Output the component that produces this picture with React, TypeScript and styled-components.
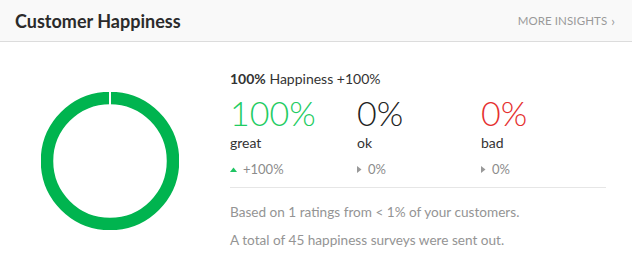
import React from 'react';
import styled, { createGlobalStyle } from 'styled-components';

const GlobalStyle = createGlobalStyle`
    html, body {
        margin: 0;
        padding: 0;
        background: #fff;
    }
    body {
        font-family: Lato, "Open Sans", sans-serif;
        color: #333;
    }
`;

const Card = styled.div`
    width: 632px;
    height: 279px;
    background: #fff;
    overflow: hidden;
`;

const Header = styled.div`
    height: 41px;
    display: flex;
    align-items: center;
    justify-content: space-between;
    padding: 0 17px 0 15px;
    background: #f9f9f9;
    border-bottom: 1px solid #dcdcdc;
`;

const Title = styled.h2`
    margin: 0;
    font-size: 18px;
    font-weight: 700;
    color: #2b2b2b;
`;

const MoreLink = styled.a`
    font-size: 11.5px;
    color: #999;
    text-decoration: none;
    letter-spacing: 0.1px;
    display: flex;
    align-items: center;
    gap: 4px;
`;

const Body = styled.div`
    display: flex;
    padding: 0 26px 0 41px;
`;

const ChartCol = styled.div`
    padding-top: 50px;
    width: 138px;
    flex-shrink: 0;
`;

const Info = styled.div`
    margin-left: 51px;
    padding-top: 28px;
    flex: 1;
`;

const Summary = styled.div`
    font-size: 14px;
    color: #333;
    b {
        font-weight: 700;
    }
`;

const Stats = styled.div`
    display: grid;
    grid-template-columns: 127px 124px 1fr;
    margin-top: 8px;
    padding-bottom: 10px;
    border-bottom: 1px solid #e6e6e6;
`;

const Stat = styled.div``;

const Big = styled.div<{ $color: string }>`
    font-size: 34px;
    font-weight: 300;
    line-height: 36px;
    color: ${p => p.$color};
`;

const Label = styled.div`
    font-size: 14px;
    color: #333;
    margin-top: 3px;
`;

const Delta = styled.div`
    margin-top: 10px;
    font-size: 13px;
    color: #8c8c8c;
    display: flex;
    align-items: center;
    gap: 6px;
`;

const Note = styled.p`
    margin: 16px 0 0;
    font-size: 13.6px;
    color: #949494;
    & + & {
        margin-top: 12px;
    }
`;

const Ring = () => (
    <svg width="138" height="138" viewBox="0 0 138 138">
        <circle cx="69" cy="69" r="63" fill="none" stroke="#00b44f" strokeWidth="12.5" />
        <rect x="68" y="0" width="2" height="14" fill="#fff" />
    </svg>
);

const TriUp = () => (
    <svg width="7" height="5" viewBox="0 0 7 5"><path d="M0 5 L3.5 0.5 L7 5 Z" fill="#1fc463" /></svg>
);

const TriRight = () => (
    <svg width="5" height="7" viewBox="0 0 5 7"><path d="M0 0 L4.5 3.5 L0 7 Z" fill="#999" /></svg>
);

const stats = [
    { value: '100%', label: 'great', color: '#1fcc63', delta: '+100%', up: true },
    { value: '0%', label: 'ok', color: '#222', delta: '0%', up: false },
    { value: '0%', label: 'bad', color: '#e5302f', delta: '0%', up: false },
];

export default function App() {
    return (
        <Card>
            <GlobalStyle />
            <Header>
                <Title>Customer Happiness</Title>
                <MoreLink href="#">MORE INSIGHTS <span style={{ fontSize: 13 }}>›</span></MoreLink>
            </Header>
            <Body>
                <ChartCol>
                    <Ring />
                </ChartCol>
                <Info>
                    <Summary><b>100%</b> Happiness +100%</Summary>
                    <Stats>
                        {stats.map(s => (
                            <Stat key={s.label}>
                                <Big $color={s.color}>{s.value}</Big>
                                <Label>{s.label}</Label>
                                <Delta>
                                    {s.up ? <TriUp /> : <TriRight />}
                                    {s.delta}
                                </Delta>
                            </Stat>
                        ))}
                    </Stats>
                    <Note>Based on 1 ratings from &lt; 1% of your customers.</Note>
                    <Note>A total of 45 happiness surveys were sent out.</Note>
                </Info>
            </Body>
        </Card>
    );
}
